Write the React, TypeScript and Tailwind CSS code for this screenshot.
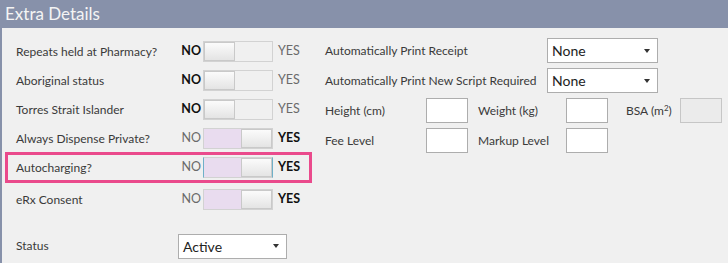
import type { ReactNode } from "react";

const font = { fontFamily: 'Lato, "Open Sans", sans-serif' };

type ToggleRowProps = {
  label: string;
  on: boolean;
  focused?: boolean;
};

function Toggle({ on, focused }: { on: boolean; focused?: boolean }) {
  return (
    <div
      className={`flex h-[21px] w-[70px] items-center border ${
        on ? "justify-end bg-[#e9dcef]" : "justify-start bg-[#f0f0f0]"
      } ${focused ? "border-x-[#6fb0c8] border-y-[#d2d2d2]" : "border-[#d2d2d2]"}`}
    >
      <div className="h-[19px] w-[31px] border border-[#c9c9c9] bg-[linear-gradient(180deg,#fbfbfb,#e4e4e4)]" />
    </div>
  );
}

function ToggleRow({ label, on, focused }: ToggleRowProps) {
  return (
    <div className="flex h-[29px] items-center whitespace-nowrap">
      <span className="w-[162px] text-[12px] text-[#3a3a3a]">{label}</span>
      <span
        className={`w-[23px] text-right text-[12.5px] ${
          on ? "text-[#6a6a6a]" : "font-bold text-[#111]"
        }`}
      >
        NO
      </span>
      <div className="ml-[2px]">
        <Toggle on={on} focused={focused} />
      </div>
      <span
        className={`ml-[5px] text-[12.5px] ${
          on ? "font-bold text-[#111]" : "text-[#6a6a6a]"
        }`}
      >
        YES
      </span>
    </div>
  );
}

function Select({ value, width }: { value: string; width: string }) {
  return (
    <div
      className={`flex h-[25px] ${width} items-center justify-between border border-[#adadad] bg-white pl-[4px] pr-[7px] text-[14px] text-[#222]`}
    >
      <span>{value}</span>
      <span className="h-0 w-0 border-x-[3px] border-t-[4px] border-x-transparent border-t-[#333]" />
    </div>
  );
}

function Box({ disabled }: { disabled?: boolean }) {
  return (
    <div
      className={`h-[25px] w-[42px] border ${
        disabled ? "border-[#c6c6c6] bg-[#ebebeb]" : "border-[#adadad] bg-white"
      }`}
    />
  );
}

function Label({ children, className = "" }: { children: ReactNode; className?: string }) {
  return (
    <span className={`whitespace-nowrap text-[12px] text-[#3a3a3a] ${className}`}>{children}</span>
  );
}

export default function App() {
  return (
    <div className="h-[263px] w-[728px] overflow-hidden bg-[#f0f0f0]" style={font}>
      <div className="flex h-[28px] items-center bg-[#8791aa] pl-[5px] text-[17px] text-[#f4f4f4]">
        Extra Details
      </div>
      <div className="flex h-[235px] border-l-2 border-[#8791aa]">
        <div className="flex w-[323px] flex-col pt-[9px]">
          <div className="pl-[14px]">
            <ToggleRow label="Repeats held at Pharmacy?" on={false} />
            <ToggleRow label="Aboriginal status" on={false} />
            <ToggleRow label="Torres Strait Islander" on={false} />
            <ToggleRow label="Always Dispense Private?" on />
          </div>
          <div className="ml-[3px] mt-[-1px] flex h-[31px] w-[307px] items-center border-[3px] border-[#ea4a8c] pl-[8px]">
            <ToggleRow label="Autocharging?" on focused />
          </div>
          <div className="mt-[2px] pl-[14px]">
            <ToggleRow label="eRx Consent" on />
          </div>
          <div className="mt-[18px] flex h-[28px] items-center pl-[14px]">
            <span className="w-[162px] text-[12px] text-[#3a3a3a]">Status</span>
            <Select value="Active" width="w-[109px]" />
          </div>
        </div>
        <div className="flex flex-col gap-[5px] pt-[10px]">
          <div className="flex items-center">
            <Label className="w-[222px]">Automatically Print Receipt</Label>
            <Select value="None" width="w-[111px]" />
          </div>
          <div className="flex items-center">
            <Label className="w-[222px]">Automatically Print New Script Required</Label>
            <Select value="None" width="w-[111px]" />
          </div>
          <div className="flex items-center">
            <Label className="w-[101px]">Height (cm)</Label>
            <Box />
            <Label className="ml-[10px] w-[88px]">Weight (kg)</Label>
            <Box />
            <Label className="ml-[18px] w-[54px]">
              BSA (m<sup className="text-[8px]">2</sup>)
            </Label>
            <Box disabled />
          </div>
          <div className="flex items-center">
            <Label className="w-[101px]">Fee Level</Label>
            <Box />
            <Label className="ml-[10px] w-[88px]">Markup Level</Label>
            <Box />
          </div>
        </div>
      </div>
    </div>
  );
}
